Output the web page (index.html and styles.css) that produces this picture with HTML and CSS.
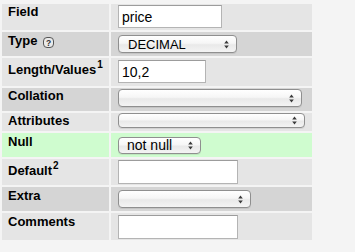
FILE: index.html
```html
<!DOCTYPE html>
<html>
<head>
<meta charset="utf-8">
<link rel="stylesheet" href="styles.css">
</head>
<body>
<div class="form">
  <div class="row r-field light">
    <div class="label">Field</div>
    <div class="value"><input class="text w-price" type="text" value="price"></div>
  </div>
  <div class="row r-type dark">
    <div class="label">Type <svg class="help" width="11" height="11" viewBox="0 0 11 11"><rect x="0.5" y="0.5" width="10" height="10" rx="3.5" fill="#eaeaea" stroke="#555"/><text x="5.5" y="8.6" text-anchor="middle" font-family="Liberation Sans, sans-serif" font-size="8.5" font-weight="bold" fill="#333">?</text></svg></div>
    <div class="value"><div class="select w-type"><span>DECIMAL</span><svg class="arr" width="5" height="9" viewBox="0 0 5 9"><path d="M2.5 0.5L4.8 3.6H0.2Z M2.5 8.5L4.8 5.4H0.2Z" fill="#3a3a3a"/></svg></div></div>
  </div>
  <div class="row r-length light">
    <div class="label">Length/Values<sup>1</sup></div>
    <div class="value"><input class="text w-length" type="text" value="10,2"></div>
  </div>
  <div class="row r-coll dark">
    <div class="label">Collation</div>
    <div class="value"><div class="select w-coll"><span></span><svg class="arr" width="5" height="9" viewBox="0 0 5 9"><path d="M2.5 0.5L4.8 3.6H0.2Z M2.5 8.5L4.8 5.4H0.2Z" fill="#3a3a3a"/></svg></div></div>
  </div>
  <div class="row r-attr light">
    <div class="label">Attributes</div>
    <div class="value"><div class="select w-attr"><span></span><svg class="arr" width="5" height="9" viewBox="0 0 5 9"><path d="M2.5 0.5L4.8 3.6H0.2Z M2.5 8.5L4.8 5.4H0.2Z" fill="#3a3a3a"/></svg></div></div>
  </div>
  <div class="row r-null green">
    <div class="label">Null</div>
    <div class="value"><div class="select w-null"><span>not null</span><svg class="arr" width="5" height="9" viewBox="0 0 5 9"><path d="M2.5 0.5L4.8 3.6H0.2Z M2.5 8.5L4.8 5.4H0.2Z" fill="#3a3a3a"/></svg></div></div>
  </div>
  <div class="row r-default light">
    <div class="label">Default<sup>2</sup></div>
    <div class="value"><input class="text w-default" type="text" value=""></div>
  </div>
  <div class="row r-extra dark">
    <div class="label">Extra</div>
    <div class="value"><div class="select w-extra"><span></span><svg class="arr" width="5" height="9" viewBox="0 0 5 9"><path d="M2.5 0.5L4.8 3.6H0.2Z M2.5 8.5L4.8 5.4H0.2Z" fill="#3a3a3a"/></svg></div></div>
  </div>
  <div class="row r-comments light">
    <div class="label">Comments</div>
    <div class="value"><input class="text w-default" type="text" value=""></div>
  </div>
</div>
</body>
</html>
```
FILE: styles.css
```css
html, body {
  margin: 0;
  padding: 0;
  background: #f4f4f4;
}
body {
  font-family: "Liberation Sans", Arial, sans-serif;
  color: #000;
}
.form {
  padding: 4px 0 0 2px;
  width: 310px;
}
.row {
  display: grid;
  grid-template-columns: 107px 201px;
  column-gap: 2px;
  margin-bottom: 2px;
}
.row > .label,
.row > .value {
  box-sizing: border-box;
}
.light > div { background: #e5e5e5; }
.dark > div { background: #d5d5d5; }
.green > div { background: #cffccf; }

.label {
  font-weight: bold;
  font-size: 13px;
  line-height: 15px;
  padding-left: 6px;
  display: flex;
  align-items: flex-start;
}
.label sup {
  font-size: 10px;
  line-height: 10px;
  position: relative;
  top: -2px;
  margin-left: 1px;
}
.help {
  margin-left: 6px;
  margin-top: 4px;
}
.value {
  padding-left: 7px;
}

.r-field { height: 26px; }
.r-field .value { padding-top: 1px; }
.r-field .label { padding-top: 0; }

.r-type { height: 24px; }
.r-type .value { padding-top: 3px; }
.r-type .label { padding-top: 1px; }

.r-length { height: 28px; }
.r-length .value { padding-top: 2px; }
.r-length .label { padding-top: 4px; }

.r-coll { height: 23px; }
.r-coll .value { padding-top: 1px; }
.r-coll .label { padding-top: 0; }

.r-attr { height: 18px; }
.r-attr .value { padding-top: 0; }
.r-attr .label { padding-top: 0; }

.r-null { height: 24px; }
.r-null .value { padding-top: 4px; }
.r-null .label { padding-top: 1px; }

.r-default { height: 26px; }
.r-default .value { padding-top: 1px; }
.r-default .label { padding-top: 4px; }

.r-extra { height: 24px; }
.r-extra .value { padding-top: 3px; }
.r-extra .label { padding-top: 1px; }

.r-comments { height: 27px; }
.r-comments .value { padding-top: 2px; }
.r-comments .label { padding-top: 1px; }

.text {
  box-sizing: border-box;
  display: block;
  margin: 0;
  height: 23px;
  border: 1px solid #b4b4b4;
  border-top-color: #9c9c9c;
  background: #fff;
  font-family: "Liberation Sans", Arial, sans-serif;
  font-size: 14px;
  color: #000;
  padding: 0 3px;
  outline: none;
}
.w-price { width: 104px; }
.w-length { width: 88px; }
.w-default { width: 120px; height: 24px; }

.select {
  box-sizing: border-box;
  height: 18px;
  border: 1px solid #8f8f8f;
  border-radius: 4px;
  background: linear-gradient(#ffffff 0%, #f6f6f6 45%, #e9e9e9 55%, #f4f4f4 100%);
  box-shadow: 0 1px 0 rgba(0,0,0,0.08);
  display: flex;
  align-items: center;
  justify-content: space-between;
  padding: 0 7px 0 9px;
  font-size: 13px;
  line-height: 15px;
}
.w-type { width: 119px; }
.w-coll { width: 184px; }
.w-attr { width: 187px; height: 15px; }
.w-null { width: 83px; height: 17px; font-size: 14px; padding-left: 8px; }
.w-extra { width: 133px; }
.arr { flex: none; }
```
